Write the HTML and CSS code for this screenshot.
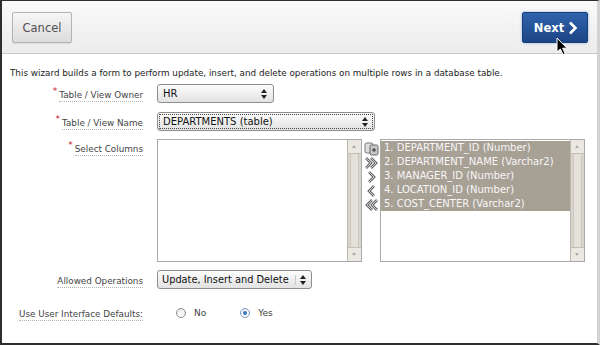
FILE: index.html
```html
<!DOCTYPE html>
<html lang="en">
<head>
    <meta charset="UTF-8">
    <title>Create Tabular Form</title>
    <link rel="stylesheet" href="styles.css">
</head>
<body>
    <div class="frame">
        <div class="toolbar">
            <button class="btn btn-cancel">Cancel</button>
            <button class="btn btn-next">Next<svg class="chev" width="10" height="14" viewBox="0 0 10 14"><polyline points="2,1.5 7.5,7 2,12.5" fill="none" stroke="#fff" stroke-width="2.6"/></svg></button>
            <!-- mouse pointer over the Next button -->
            <svg class="cursor" width="13" height="19" viewBox="0 0 13 19"><path d="M1 1 L1 15 L4.3 12 L7 17.6 L9.2 16.6 L6.6 11.2 L11 11.2 Z" fill="#000" stroke="#fff" stroke-width="1"/></svg>
        </div>

        <p class="intro">This wizard builds a form to perform update, insert, and delete operations on multiple rows in a database table.</p>

        <div class="form">
            <div class="row row-sel">
                <div class="lbl"><sup class="star">*</sup><span>Table / View Owner</span></div>
                <div class="select sel-owner"><span>HR</span><svg class="updown" width="6" height="10" viewBox="0 0 6 10"><path d="M3 0 L6 4 L0 4 Z M0 6 L6 6 L3 10 Z" fill="#222"/></svg></div>
            </div>
            <div class="row row-sel">
                <div class="lbl"><sup class="star">*</sup><span>Table / View Name</span></div>
                <div class="select sel-name focused"><span>DEPARTMENTS (table)</span><svg class="updown" width="6" height="10" viewBox="0 0 6 10"><path d="M3 0 L6 4 L0 4 Z M0 6 L6 6 L3 10 Z" fill="#222"/></svg></div>
            </div>
            <div class="row row-cols">
                <div class="lbl"><sup class="star">*</sup><span>Select Columns</span></div>
                <div class="shuttle">
                    <div class="listbox">
                        <ul class="items"></ul>
                        <div class="scroll"><div class="sbtn up"></div><div class="track"></div><div class="sbtn down"></div></div>
                    </div>
                    <div class="moves">
                        <svg width="15" height="14" viewBox="0 0 15 14"><rect x="1" y="1" width="8" height="10" rx="1.5" fill="#ddd" stroke="#777"/><rect x="6" y="3" width="8" height="10" rx="1.5" fill="#c8c8c8" stroke="#666"/><path d="M8 8 h4 M10 6 v4" stroke="#555" stroke-width="1.4"/></svg>
                        <svg width="15" height="14" viewBox="0 0 15 14"><path d="M2 2 L7 7 L2 12 M7 2 L12 7 L7 12" fill="none" stroke="#666" stroke-width="2.6"/><path d="M2 2 L7 7 L2 12 M7 2 L12 7 L7 12" fill="none" stroke="#ccc" stroke-width="1"/></svg>
                        <svg width="15" height="14" viewBox="0 0 15 14"><path d="M5 2 L10 7 L5 12" fill="none" stroke="#666" stroke-width="2.6"/><path d="M5 2 L10 7 L5 12" fill="none" stroke="#ccc" stroke-width="1"/></svg>
                        <svg width="15" height="14" viewBox="0 0 15 14"><path d="M10 2 L5 7 L10 12" fill="none" stroke="#666" stroke-width="2.6"/><path d="M10 2 L5 7 L10 12" fill="none" stroke="#ccc" stroke-width="1"/></svg>
                        <svg width="15" height="14" viewBox="0 0 15 14"><path d="M8 2 L3 7 L8 12 M13 2 L8 7 L13 12" fill="none" stroke="#666" stroke-width="2.6"/><path d="M8 2 L3 7 L8 12 M13 2 L8 7 L13 12" fill="none" stroke="#ccc" stroke-width="1"/></svg>
                    </div>
                    <div class="listbox">
                        <ul class="items">
                            <li>1. DEPARTMENT_ID (Number)</li>
                            <li>2. DEPARTMENT_NAME (Varchar2)</li>
                            <li>3. MANAGER_ID (Number)</li>
                            <li>4. LOCATION_ID (Number)</li>
                            <li>5. COST_CENTER (Varchar2)</li>
                        </ul>
                        <div class="scroll"><div class="sbtn up"></div><div class="track"></div><div class="sbtn down"></div></div>
                    </div>
                </div>
            </div>
            <div class="row row-sel">
                <div class="lbl"><span>Allowed Operations</span></div>
                <div class="select sel-ops"><span>Update, Insert and Delete</span><svg class="updown" width="6" height="10" viewBox="0 0 6 10"><path d="M3 0 L6 4 L0 4 Z M0 6 L6 6 L3 10 Z" fill="#222"/></svg></div>
            </div>
            <div class="row row-radio">
                <div class="lbl"><span>Use User Interface Defaults:</span></div>
                <div class="radios">
                    <label class="radio"><i class="dot"></i>No</label>
                    <label class="radio"><i class="dot on"></i>Yes</label>
                </div>
            </div>
        </div>
    </div>
</body>
</html>
```

FILE: styles.css
```css
html, body{
    margin:0;
    padding:0;
    background:#fff;
}
body{
    font-family:"DejaVu Sans", sans-serif;
    color:#333;
}
.frame{
    width:600px;
    height:345px;
    box-sizing:border-box;
    border-top:1px solid #2e2e2e;
    border-left:2px solid #2e2e2e;
    border-bottom:2px solid #2e2e2e;
    border-right:3px solid #d2d2d2;
    overflow:hidden;
}

/* top button bar */
.toolbar{
    position:relative;
    border-bottom:1px solid #c9c9c9;
    background:linear-gradient(#fafafa, #ececec);
    display:flex;
    justify-content:space-between;
    align-items:flex-start;
    padding:11px 9px 0 10px;
    height:41px;
}
.btn{
    height:31px;
    border-radius:2px;
    font-family:"DejaVu Sans", sans-serif;
    cursor:pointer;
    padding:0;
}
.btn-cancel{
    width:60px;
    font-size:11.5px;
    color:#505050;
    border:1px solid #b3b3b3;
    background:linear-gradient(#f6f6f6, #dcdcdc);
    box-shadow:0 1px 1px rgba(0,0,0,0.08);
}
.btn-next{
    width:66px;
    font-size:11.5px;
    font-weight:bold;
    color:#fff;
    border:1px solid #163e78;
    background:linear-gradient(#2f63ad, #1c4585);
    box-shadow:0 0 3px #8fb3e0;
    display:flex;
    align-items:center;
    justify-content:center;
    gap:4px;
    padding-left:2px;
}
.chev{
    display:block;
}
.cursor{
    position:absolute;
    left:554px;
    top:36px;
}

.intro{
    margin:12px 0 0 8px;
    font-size:8.8px;
    line-height:14px;
    color:#222;
}

/* form rows */
.form{
    margin-top:4px;
}
.row{
    display:flex;
    align-items:flex-start;
}
.lbl{
    width:155px;
    box-sizing:border-box;
    padding-right:14px;
    padding-top:6px;
    text-align:right;
    font-size:8.8px;
    line-height:11px;
    color:#444;
    white-space:nowrap;
}
.lbl span{
    display:inline-block;
    border-bottom:1px dotted #b5b5b5;
}
.star{
    color:#c8102e;
    font-size:9px;
    vertical-align:4px;
    line-height:0;
    margin-right:2px;
}
.row-sel{
    margin-bottom:8px;
}
.row-sel:first-child{
    margin-bottom:9px;
}
.row-cols{
    margin-bottom:8px;
}
.row-cols .lbl{
    padding-top:5px;
}

.select{
    height:19px;
    box-sizing:border-box;
    border:1px solid #8e8e8e;
    border-radius:3px;
    background:linear-gradient(#fdfdfd, #e2e2e2);
    display:flex;
    align-items:center;
    justify-content:space-between;
    padding:0 6px 0 5px;
    font-size:10px;
    color:#111;
    white-space:nowrap;
}
.sel-owner{ width:117px; }
.sel-name{ width:218px; }
.sel-ops{
    width:155px;
    padding:0 5px 0 4px;
    font-size:9.8px;
}
.sel-ops .updown{
    border-left:1px solid #c8c8c8;
    padding-left:4px;
}
.focused{
    outline:1px dotted #444;
    outline-offset:-3px;
}
.updown{
    display:block;
    flex:none;
}

/* shuttle */
.shuttle{
    display:flex;
    align-items:flex-start;
}
.listbox{
    width:205px;
    height:123px;
    box-sizing:border-box;
    border:1px solid #a9a9a9;
    display:flex;
    background:#fff;
}
.items{
    flex:1;
    margin:0;
    padding:1px 0 0 0;
    list-style:none;
}
.items li{
    background:#a7a095;
    color:#f7f7f7;
    font-size:10px;
    line-height:14px;
    padding-left:3px;
    white-space:nowrap;
}
.scroll{
    width:13px;
    display:flex;
    flex-direction:column;
    border-left:1px solid #bdb8ae;
    background:#d9d5cd;
}
.track{
    flex:1;
    margin:0 2px;
    background:#e4e1da;
    border-left:1px solid #cdc8bf;
    border-right:1px solid #cdc8bf;
}
.sbtn{
    height:13px;
    background:#ebe8e2;
    border-bottom:1px solid #c4bfb5;
    position:relative;
}
.sbtn.down{
    border-bottom:none;
    border-top:1px solid #c4bfb5;
}
.sbtn::after{
    content:"";
    position:absolute;
    left:4px;
    top:5px;
    border-left:2.5px solid transparent;
    border-right:2.5px solid transparent;
}
.sbtn.up::after{ border-bottom:3px solid #aaa; }
.sbtn.down::after{ border-top:3px solid #aaa; }
.moves{
    width:18px;
    display:flex;
    flex-direction:column;
    align-items:center;
    padding-top:3px;
}
.moves svg{
    display:block;
}

/* radios */
.row-radio{
    margin-top:14px;
}
.radios{
    display:flex;
    gap:34px;
    padding:5px 0 0 19px;
}
.radio{
    display:flex;
    align-items:center;
    gap:8px;
    font-size:9px;
    color:#444;
}
.dot{
    width:10px;
    height:10px;
    box-sizing:border-box;
    border:1px solid #8a8a8a;
    border-radius:50%;
    background:linear-gradient(#e9e9e9, #fff);
    position:relative;
}
.dot.on{
    border-color:#7c9cc4;
}
.dot.on::after{
    content:"";
    position:absolute;
    left:2px;
    top:2px;
    width:4px;
    height:4px;
    border-radius:50%;
    background:#3f77c0;
}
```
